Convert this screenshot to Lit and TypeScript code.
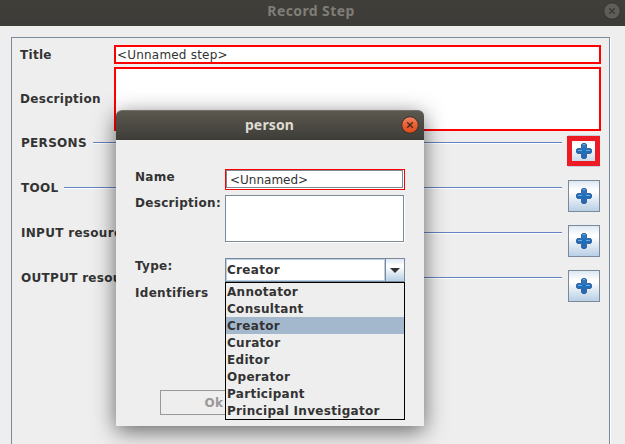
import { LitElement, html, css } from "lit";
import { customElement, property } from "lit/decorators.js";

@customElement("close-button")
class CloseButton extends LitElement {
  @property({ type: Boolean, reflect: true }) active = false;
  static styles = css`
    :host { display: block; width: 18px; height: 18px; }
    svg { display: block; }
    .disc { fill: #5f5d57; stroke: #34332e; }
    .mark { stroke: #393832; stroke-width: 1.3; fill: none; }
    :host([active]) .disc { fill: url(#warm); stroke: #33302a; }
    :host([active]) .mark { stroke: #3c2a1c; }
  `;
  render() {
    return html`<svg width="18" height="18" viewBox="0 0 18 18">
      <defs><linearGradient id="warm" x1="0" y1="0" x2="0" y2="1">
        <stop offset="0" stop-color="#f58462"/><stop offset=".5" stop-color="#ea6035"/><stop offset="1" stop-color="#df4a16"/>
      </linearGradient></defs>
      <circle class="disc" cx="9" cy="9" r="8.3"/>
      <path class="mark" d="M6.2 6.2 11.8 11.8M11.8 6.2 6.2 11.8"/>
    </svg>`;
  }
}

@customElement("add-button")
class AddButton extends LitElement {
  @property({ type: Boolean, reflect: true }) marked = false;
  static styles = css`
    :host { display: block; position: relative; width: 32px; height: 32px; }
    .face {
      box-sizing: border-box; width: 32px; height: 32px; padding: 3px;
      border: 1px solid #7a8a99;
      background: linear-gradient(#dde8f3 0, #fff 30%, #fff 36%, #b8cfe5 100%);
    }
    :host([marked]) .face { border-color: #c4cedd; }
    .ring {
      position: absolute; left: -1px; top: 1px; box-sizing: border-box;
      width: 33px; height: 30px; border: 5px solid #ed1c24;
    }
    svg { display: block; }
  `;
  render() {
    return html`<div class="face"><svg width="24" height="24" viewBox="0 0 24 24">
        <defs><linearGradient id="blue" x1="0" y1="0" x2="0" y2="1">
          <stop offset="0" stop-color="#3b7cc0"/><stop offset=".5" stop-color="#1d6fbb"/><stop offset="1" stop-color="#2a66ad"/>
        </linearGradient></defs>
        <path d="M10.5 4.5H13.500L14.500 5.500V9.500H18.500L19.500 10.500V13.500L18.500 14.500H14.500V18.500L13.500 19.500H10.500L9.500 18.500V14.500H5.500L4.500 13.500V10.500L5.500 9.500H9.500V5.500Z"
          fill="url(#blue)" stroke="#3a659f"/>
        <path d="M6 11.500H10M14 11.500H18M11 5.500H13" stroke="#74a9dc" fill="none"/>
      </svg></div>
      ${this.marked ? html`<div class="ring"></div>` : ""}`;
  }
}

@customElement("person-dialog")
class PersonDialog extends LitElement {
  private types = ["Annotator", "Consultant", "Creator", "Curator", "Editor", "Operator", "Participant", "Principal Investigator"];
  static styles = css`
    :host {
      display: block; width: 308px; height: 316px; background: #eee;
      border-radius: 6px 6px 0 0;
      box-shadow: 0 5px 22px rgba(0,0,0,.58);
    }
    .bar {
      display: grid; grid-template-columns: 28px 1fr 28px; align-items: center; height: 30px;
      box-sizing: border-box; border-radius: 6px 6px 0 0; border-top: 1px solid #74716a;
      background: linear-gradient(#5b584f, #3d3c37);
    }
    .bar close-button { margin: -1px 0 0 5px; }
    .title {
      grid-column: 2; text-align: center; color: #dfdbd2; margin: -1px 1px 0 0;
      font: bold 14px/20px "Noto Sans", "Open Sans", sans-serif; letter-spacing: .15px;
    }
    .form { display: grid; grid-template-columns: 90px 180px; padding: 29px 0 0 19px; }
    label { display: block; line-height: 16px; white-space: nowrap; }
    .input { box-sizing: border-box; height: 21px; border: 1px solid red; background: #fff; }
    .inner {
      box-sizing: border-box; height: 18px; width: 177px; border: 1px solid #7a8a99;
      padding-left: 3px; font-weight: normal; line-height: 18px; letter-spacing: 0;
    }
    .area {
      box-sizing: border-box; width: 179px; height: 47px; border: 1px solid #7a8a99;
      background: #fff; box-shadow: 1px 1px #fff;
    }
    .combo { box-sizing: border-box; height: 24px; display: flex; border: 1px solid #7a8a99; }
    .value {
      flex: 1; box-sizing: border-box; border: 1px solid #b8cfe5; background: #fff; line-height: 21px;
    }
    .drop {
      width: 18px; border-left: 1px solid #7a8a99; display: grid; place-items: center;
      background: linear-gradient(#dde8f3 0, #fff 30%, #fff 36%, #b8cfe5 100%);
    }
    .pick { position: relative; height: 24px; }
    .list {
      position: absolute; left: 0; top: 24px; box-sizing: border-box; width: 180px;
      border: 1px solid #000; background: #eee;
    }
    .item { height: 17px; line-height: 19px; padding-left: 1px; white-space: nowrap; }
    .item.on { background: #a3b8cc; }
    .short { height: 26px; }
    .tall { height: 63px; }
    .ident { padding-top: 3px; grid-column: 1; }
    .ok {
      box-sizing: border-box; width: 108px; height: 25px; margin: 89px 0 0 44px;
      border: 1px solid #999; color: #999; line-height: 24px; text-align: center;
    }
  `;
  render() {
    return html`
      <div class="bar"><span class="title">person</span><close-button active></close-button></div>
      <div class="form">
        <label>Name</label><div class="short"><div class="input"><div class="inner">&lt;Unnamed&gt;</div></div></div>
        <label>Description:</label><div class="tall"><div class="area"></div></div>
        <label>Type:</label>
        <div class="pick">
          <div class="combo"><div class="value">Creator</div>
            <div class="drop"><svg width="10" height="5"><path d="M0 0h10L5 5z" fill="#333"/></svg></div></div>
          <div class="list">${this.types.map(t => html`<div class="item ${t === "Creator" ? "on" : ""}">${t}</div>`)}</div>
        </div>
        <label class="ident">Identifiers</label>
      </div>
      <div class="ok">Ok</div>`;
  }
}

@customElement("app-root")
class AppRoot extends LitElement {
  static styles = css`
    :host {
      display: block; position: relative; width: 625px; height: 444px; overflow: hidden;
      background: #eee; color: #333; font: bold 12px "DejaVu Sans", sans-serif; letter-spacing: .3px;
    }
    .bar {
      height: 26px; display: grid; grid-template-columns: 26px 1fr 26px; align-items: center;
      background: linear-gradient(#403f3a, #3c3b37);
    }
    .bar close-button { margin: -4px 0 0 4px; }
    .title {
      grid-column: 2; text-align: center; color: #807d78; margin: -4px 3px 0 0;
      font: bold 14px/20px "Noto Sans", "Open Sans", sans-serif; letter-spacing: .4px;
    }
    .panel {
      box-sizing: border-box; width: 599px; height: 420px; margin: 11px 0 0 11px;
      border: 1px solid #7a8a99; box-shadow: 1px 1px #fff;
      padding: 7px 8px 0;
    }
    .field { display: grid; grid-template-columns: 94px 487px; align-items: center; }
    .box { box-sizing: border-box; border: 2px solid red; background: #fff; }
    .one { height: 19px; line-height: 16px; font-weight: normal; letter-spacing: .2px; padding-left: 1px; }
    .many { height: 64px; }
    .gap { margin-top: 3px; }
    .sections { padding: 4px 1px 0 1px; }
    .section { display: flex; align-items: flex-start; height: 45px; white-space: nowrap; }
    .section span { line-height: 16px; }
    .rule { flex: 1; height: 1px; margin: 7px 6px 0 6px; background: #6382bf; box-shadow: 0 1px #fff; }
    person-dialog { position: absolute; left: 116px; top: 110px; }
  `;
  render() {
    return html`
      <div class="bar"><span class="title">Record Step</span><close-button></close-button></div>
      <div class="panel">
        <div class="field"><span>Title</span><div class="box one">&lt;Unnamed step&gt;</div></div>
        <div class="field gap"><span>Description</span><div class="box many"></div></div>
        <div class="sections">
          ${["PERSONS", "TOOL", "INPUT resources", "OUTPUT resources"].map((s, i) => html`
            <div class="section"><span>${s}</span><i class="rule"></i><add-button ?marked=${i === 0}></add-button></div>`)}
        </div>
      </div>
      <person-dialog></person-dialog>`;
  }
}
